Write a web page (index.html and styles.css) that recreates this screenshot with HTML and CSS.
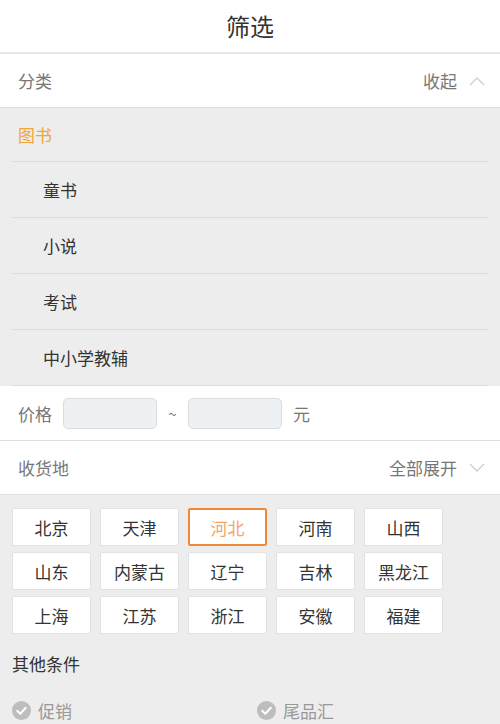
FILE: index.html
```html
<!DOCTYPE html>
<html lang="zh-CN">
<head>
  <meta charset="UTF-8">
  <meta name="viewport" content="width=device-width, initial-scale=1.0">
  <title>筛选</title>
  <link rel="stylesheet" href="styles.css">
</head>
<body>
  <div class="title">筛选</div>

  <!-- 分类 -->
  <div class="row">
    <span class="label">分类</span>
    <span class="toggle">收起
      <svg class="chev" width="16" height="10" viewBox="0 0 16 10"><polyline points="1,9 8,2 15,9" fill="none" stroke="#cfcfcf" stroke-width="1.3"/></svg>
    </span>
  </div>
  <div class="cat-list">
    <div class="cat-item first active">图书</div>
    <div class="cat-item sub">童书</div>
    <div class="cat-item sub">小说</div>
    <div class="cat-item sub">考试</div>
    <div class="cat-item sub">中小学教辅</div>
  </div>

  <!-- 价格 -->
  <div class="row price">
    <span class="label">价格</span>
    <input type="text" class="price-input from">
    <span class="tilde">~</span>
    <input type="text" class="price-input">
    <span class="label unit">元</span>
  </div>

  <!-- 收货地 -->
  <div class="row">
    <span class="label">收货地</span>
    <span class="toggle">全部展开
      <svg class="chev" width="16" height="10" viewBox="0 0 16 10"><polyline points="1,1 8,8 15,1" fill="none" stroke="#cfcfcf" stroke-width="1.3"/></svg>
    </span>
  </div>
  <div class="region">
    <div class="areas">
      <div class="area">北京</div>
      <div class="area">天津</div>
      <div class="area selected">河北</div>
      <div class="area">河南</div>
      <div class="area">山西</div>
      <div class="area">山东</div>
      <div class="area">内蒙古</div>
      <div class="area">辽宁</div>
      <div class="area">吉林</div>
      <div class="area">黑龙江</div>
      <div class="area">上海</div>
      <div class="area">江苏</div>
      <div class="area">浙江</div>
      <div class="area">安徽</div>
      <div class="area">福建</div>
    </div>

    <div class="other-title">其他条件</div>
    <div class="checks">
      <div class="check">
        <svg width="19" height="19" viewBox="0 0 19 19"><circle cx="9.5" cy="9.5" r="9.5" fill="#bdbdbd"/><polyline points="5.2,9.8 8.3,12.8 13.8,6.8" fill="none" stroke="#fff" stroke-width="2" stroke-linecap="round" stroke-linejoin="round"/></svg>
        <span>促销</span>
      </div>
      <div class="check">
        <svg width="19" height="19" viewBox="0 0 19 19"><circle cx="9.5" cy="9.5" r="9.5" fill="#bdbdbd"/><polyline points="5.2,9.8 8.3,12.8 13.8,6.8" fill="none" stroke="#fff" stroke-width="2" stroke-linecap="round" stroke-linejoin="round"/></svg>
        <span>尾品汇</span>
      </div>
    </div>
  </div>
</body>
</html>
```

FILE: styles.css
```css
body {
  margin: 0;
  font-family: "Noto Sans CJK SC", "Noto Sans", sans-serif;
  color: #333;
  background: #ededed;
}
.title {
  height: 52px;
  line-height: 52px;
  text-align: center;
  font-size: 24px;
  color: #333;
  background: #fff;
  border-bottom: 2px solid #e6e6e6;
}
.row {
  display: flex;
  align-items: center;
  justify-content: space-between;
  height: 53px;
  padding: 0 15px 0 18px;
  background: #fff;
  border-bottom: 1px solid #e0e0e0;
  font-size: 17px;
}
.label {
  color: #777;
}
.toggle {
  display: flex;
  align-items: center;
  gap: 12px;
  color: #777;
}
.cat-list {
  background: #ededed;
}
.cat-item {
  height: 55px;
  line-height: 55px;
  margin: 0 12px;
  padding-left: 6px;
  border-bottom: 1px solid #dcdcdc;
  font-size: 17px;
  color: #333;
}
.cat-item.first {
  height: 53px;
  line-height: 53px;
}
.cat-item.active {
  color: #f2a33a;
}
.cat-item.sub {
  padding-left: 31px;
}
.price {
  justify-content: flex-start;
  height: 54px;
}
.price-input {
  width: 94px;
  height: 31px;
  box-sizing: border-box;
  margin: 0;
  background: #eef1f4;
  border: 1px solid #d9dde2;
  border-radius: 5px;
}
.price-input.from {
  margin-left: 11px;
}
.tilde {
  width: 31px;
  text-align: center;
  color: #777;
  font-size: 15px;
}
.unit {
  margin-left: 11px;
}
.region {
  padding: 13px 12px 0;
}
.areas {
  display: grid;
  grid-template-columns: repeat(5, 79px);
  column-gap: 9px;
  row-gap: 6px;
}
.area {
  height: 38px;
  box-sizing: border-box;
  background: #fff;
  border: 1px solid #e2e2e2;
  border-radius: 2px;
  display: flex;
  align-items: center;
  justify-content: center;
  font-size: 17px;
  color: #333;
}
.area.selected {
  border: 2px solid #f0883a;
  color: #f3a36a;
}
.other-title {
  margin-top: 18px;
  font-size: 17px;
  line-height: 24px;
  color: #333;
}
.checks {
  display: flex;
  margin-top: 22px;
}
.check {
  flex: 0 0 245px;
  display: flex;
  align-items: center;
  gap: 7px;
  font-size: 17px;
  color: #999;
}
```
